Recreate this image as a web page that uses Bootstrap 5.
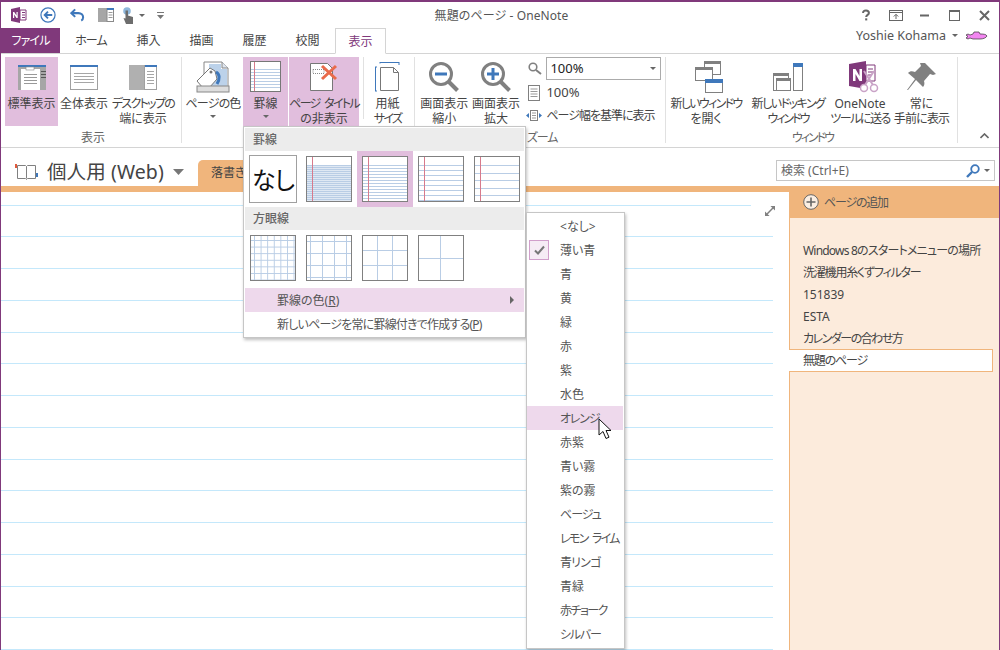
<!DOCTYPE html>
<html lang="ja">
<head>
<meta charset="utf-8">
<title>無題のページ - OneNote</title>
<link href="https://cdn.jsdelivr.net/npm/bootstrap@5.3.0/dist/css/bootstrap.min.css" rel="stylesheet">
<style>
html,body{margin:0;height:650px;overflow:hidden;background:#fff}
body{font-family:"Noto Sans","Noto Sans CJK JP",sans-serif;font-size:12px;line-height:15px;color:#444;font-feature-settings:"palt"}
#app{position:relative;width:1000px;height:650px;overflow:hidden;border-top:2px solid #80397b;border-left:1px solid #80397b;border-right:1px solid #80397b;display:flex;flex-direction:column}
svg{display:block}
.titlebar{height:26px;display:grid;grid-template-columns:1fr auto 1fr;align-items:center}
.qat{padding-left:10px}
.m4{margin-left:4px}.m8{margin-left:8px}.m12{margin-left:12px}.m13{margin-left:13px}.m14{margin-left:14px}
.wintitle{font-size:12px;letter-spacing:.1px;color:#555;padding-left:3px}
.winctl>span{width:29.5px;display:flex;justify-content:center}
.tabrow{height:26px;border-bottom:1px solid #d4d4d4;position:relative}
.rtab{height:25px;display:flex;align-items:center;justify-content:center;width:53px;color:#444}
.rtab-file{width:59px;background:#80397b;color:#fff;margin-top:0}
.rtab-home{width:62px}
.rtab-on{width:51px;margin-left:1px;height:26px;border:1px solid #d4d4d4;border-bottom:1px solid #fff;background:#fff;color:#80397b}
.account{margin-left:auto;padding-right:11px;gap:6px;color:#555;font-size:12.5px}
.subm{margin-left:2px}
.ribbon{height:94px;border-bottom:1px solid #d4d4d4;padding:3px 0 0 4px}
.rgroup{height:86px;border-right:1px solid #e1e1e1;position:relative}
.g1{width:177px}.g2{width:233px;padding-left:2px}.g3{width:251px;padding-left:4px}.g4{width:292px;padding-left:2px}
.grow-top{height:74px;gap:1px}
.grouplabel{text-align:center;color:#666;line-height:14px;min-height:14px}
.rbtn{height:69px;display:flex;flex-direction:column;align-items:center;text-align:center;white-space:nowrap;color:#444}
.rbtn-ico{height:39px;display:flex;align-items:center;justify-content:center;flex:none}
.rbtn-on{background:#e1bedd}
.w53{width:53px}.w50{width:50px}.w66{width:66px}.w58{width:58px}.w45{width:45px}.w70{width:70px}.w76{width:76px}.w78{width:78px}.w60{width:60px}.w61{width:61px}.w52{width:52px}
.gap2{margin-left:2px}
.ico-r3{margin-left:6px}.ico-r4{margin-left:8px}
.innersep{width:1px;height:62px;background:#e1e1e1;margin:0 0 0 3px}
.tri{display:inline-block;width:0;height:0;border-left:3px solid transparent;border-right:3px solid transparent;border-top:3px solid #666;vertical-align:middle}
.k05{letter-spacing:-.5px}.k08{letter-spacing:-.8px}.k1{letter-spacing:-1px}.k12{letter-spacing:-1.2px}.k15{letter-spacing:-1.5px}.k17{letter-spacing:-1.7px}.k2{letter-spacing:-2px}
.ws{word-spacing:3px}
.zoomcol{width:140px;margin-left:6px}
.zoomrow{height:23px;gap:4px;white-space:nowrap}
.zr2{margin-top:1px;font-size:13px}
.pw-ico{margin-left:-2px}
.combo{width:115px;height:23px;border:1px solid #ababab;padding:0 4px 0 3px;font-size:13px;color:#222}
.collapse-ctl{margin-left:auto;align-self:flex-end;padding:0 10px 8px 0}
.nbbar{height:38px;position:relative}
.nbname{font-size:19.5px;color:#444;line-height:24px;white-space:nowrap;letter-spacing:.1px}
.nbleft{padding:12px 0 0 14px;gap:9px}
.sectab{width:130px;height:26px;margin:12px 0 0 14px;background:#f0b57c;border-radius:5px 0 0 0;padding:5px 0 0 13px;color:#444;white-space:nowrap;overflow:hidden}
.searchbox{width:219px;height:21px;border:1px solid #c6c6c6;margin:12px 4px 0 auto;padding:0 4px;color:#666;justify-content:space-between;align-items:center}
.workarea{flex:1 1 auto;min-height:0;position:relative}
.pagecol{width:788px;border-top:6px solid #f0b57c;position:relative;flex:none}
.ruled{margin-right:16px;height:100%;background:repeating-linear-gradient(to bottom,#fff 0 12.7px,#c4e8fb 12.7px 13.7px,#fff 13.7px 31.75px)}
.expander{position:absolute;top:0;right:0;width:38px;height:30px;background:#fff;padding:14px 0 0 14px}
.panecol{flex:1 1 auto;background:#fcebdc;border-left:1px solid #f0b57c;position:relative}
.addpage{height:32px;background:#f0b57c;margin-left:-1px;padding-left:14px;gap:5px;color:#555}
.pagelist{padding-top:21px}
.pageitem{height:22px;padding-left:13px;display:flex;align-items:center;color:#444;white-space:nowrap}
.pageitem-on{background:#fff;border:1px solid #f0b57c;border-left:0;width:204px;margin-left:-1px;padding-left:14px;height:23px}
.rulemenu{display:block;top:124px;left:242px;width:283px;height:212px;padding:1px 1px 2px;border:1px solid #c6c6c6;border-radius:0;background:#fff;box-shadow:1px 2px 3px rgba(0,0,0,.25);font-size:12px;color:#555;min-width:0}
.mhead{height:23px;background:#ececec;padding:4px 0 0 8px;font-weight:500;color:#666}
.thumbrow{height:56px;align-items:center}
.gridrow{height:58px;align-items:flex-start}
.thumbcell{width:56px;height:56px;display:flex;align-items:center;justify-content:center;flex:none}
.thumbcell-on{background:#e1bedd}
.thumb{width:46px;height:46px;border:1px solid #808080;background-color:#fff}
.t-none{width:48px;height:48px;border-color:#a0a0a0;display:flex;align-items:center;justify-content:center;font-size:24px;color:#111;letter-spacing:-1px}
.t1,.t2,.t3,.t4{background-repeat:no-repeat;background-size:1px 100%,100% 100%;background-position:5px 0,0 8px}
.t1{background-image:linear-gradient(#d77a8c,#d77a8c),repeating-linear-gradient(to bottom,#b9cde5 0 1px,#dfe8f3 1px 2px)}
.t2{background-image:linear-gradient(#d77a8c,#d77a8c),repeating-linear-gradient(to bottom,#b9cde5 0 1px,#fff 1px 3px)}
.t3{background-image:linear-gradient(#d77a8c,#d77a8c),repeating-linear-gradient(to bottom,#b9cde5 0 1px,#fff 1px 5px)}
.t4{background-image:linear-gradient(#d77a8c,#d77a8c),repeating-linear-gradient(to bottom,#b9cde5 0 1px,#fff 1px 7.6px)}
.g-a,.g-b,.g-c,.g-d{background-image:linear-gradient(#b9cde5 1px,transparent 1px),linear-gradient(90deg,#b9cde5 1px,transparent 1px)}
.g-a{background-size:6.6px 6.6px;background-position:3px 4px}
.g-b{background-size:12px 12px;background-position:3px 5px}
.g-c{background-size:15px 15px;background-position:14px 14px}
.g-d{background-size:44px 44px;background-position:21px 22px}
.mrow{height:24px;display:flex;align-items:center;padding-left:32px;position:relative}
.mrow-on{background:#eed9ec}
.mrow-last{height:25px}
.arrow-r{position:absolute;right:10px;top:8px;width:0;height:0;border-top:4px solid transparent;border-bottom:4px solid transparent;border-left:4px solid #666}
.colormenu{display:block;top:210px;left:525px;width:99px;height:437px;padding:1px 1px 1px 0;border:1px solid #c6c6c6;border-radius:0;background:#fff;box-shadow:1px 2px 3px rgba(0,0,0,.25);font-size:12px;color:#555;min-width:0}
.citem{height:24px;display:flex;align-items:center;padding-left:33px;white-space:pre;position:relative}
.citem-hot{background:#eed9ec}
.chk{position:absolute;left:2px;top:2px;width:20px;height:20px;background:#f6ecf5;border:1px solid #d19fcb;display:flex;align-items:center;justify-content:center}
.cursorov{position:absolute;left:597px;top:416px;z-index:1100}
.u{text-decoration:underline}
</style>
</head>
<body>
<div id="app">
  <div class="titlebar">
    <div class="qat d-flex align-items-center">
      <svg width="16" height="16" viewBox="0 0 16 16"><path d="M0 2 9 0v16L0 14z" fill="#80397b"/><path d="M9 3h6v10H9z" fill="#fff" stroke="#80397b"/><path d="M11 5.500h3M11 8h3M11 10.500h3" stroke="#80397b"/><path d="M2 11V5h1.200l2.300 3.500V5h1.200v6H5.500L3.200 7.500V11z" fill="#fff"/></svg>
      <svg class="m13" width="16" height="16" viewBox="0 0 17 17"><circle cx="8.500" cy="8.500" r="7.500" fill="#fff" stroke="#3f78bb" stroke-width="1.300"/><path d="M13 8.500H5M8.500 5 5 8.500 8.500 12" fill="none" stroke="#3f78bb" stroke-width="2"/></svg>
      <svg class="m14" width="15" height="14" viewBox="0 0 16 14"><path d="M5.500 1 1.500 5l4 4" fill="none" stroke="#3f78bb" stroke-width="2.200"/><path d="M2 5h7c3 0 5 2 5 4.500 0 1.500-1 3-2 3.500" fill="none" stroke="#3f78bb" stroke-width="2.200"/></svg>
      <svg class="m13" width="16" height="14" viewBox="0 0 16 14"><rect width="9" height="14" fill="#a6a6a6"/><rect x="9" y=".5" width="6.500" height="13" fill="#fff" stroke="#8a8a8a"/><rect x="9" width="7" height="2" fill="#3f78bb"/><path d="M10.500 4.500h4M10.500 7h4M10.500 9.500h4" stroke="#999"/></svg>
      <svg class="m8" width="13" height="17" viewBox="0 0 13 17"><circle cx="5" cy="4" r="3.800" fill="#8fb8dc"/><path d="M3.500 3.500h2.500v5l5 1.500v7H4L1.500 11l2 .5z" fill="#6d6d6d"/></svg>
      <span class="tri m4"></span>
      <svg class="m12" width="7" height="9" viewBox="0 0 7 9"><path d="M0 1.500h7" stroke="#777"/><path d="M0 4h7L3.500 8z" fill="#777"/></svg>
    </div>
    <div class="wintitle">無題のページ - OneNote</div>
    <div class="winctl d-flex justify-content-end align-items-center">
      <span><svg width="10" height="12" viewBox="0 0 12 14"><path d="M2.500 4.500C2.500 2.500 4 1.500 6 1.500s3.500 1 3.500 3c0 2.300-3.300 2.500-3.300 5" fill="none" stroke="#666" stroke-width="2.400"/><rect x="5" y="11" width="2.500" height="2.500" fill="#666"/></svg></span>
      <span><svg width="14" height="11" viewBox="0 0 14 11"><rect x=".5" y=".5" width="13" height="10" fill="#fff" stroke="#666"/><path d="M.5 2.500h13" stroke="#666"/><path d="M7 9V4.500M4.800 6.500 7 4.300l2.200 2.200" fill="none" stroke="#666"/></svg></span>
      <span><svg width="10" height="3" viewBox="0 0 10 3"><rect y=".5" width="9" height="2" fill="#666"/></svg></span>
      <span><svg width="11" height="11" viewBox="0 0 11 11"><rect x=".5" y=".5" width="10" height="10" fill="none" stroke="#666"/><rect width="11" height="2" fill="#666"/></svg></span>
      <span><svg width="11" height="11" viewBox="0 0 11 11"><path d="M1 1l9 9M10 1l-9 9" stroke="#666" stroke-width="2"/></svg></span>
    </div>
  </div>

  <div class="tabrow d-flex align-items-start">
    <div class="rtab rtab-file k08">ファイル</div>
    <div class="rtab rtab-home k1">ホーム</div>
    <div class="rtab">挿入</div>
    <div class="rtab">描画</div>
    <div class="rtab">履歴</div>
    <div class="rtab">校閲</div>
    <div class="rtab rtab-on">表示</div>
    <div class="account d-flex align-items-center">
      <span>Yoshie Kohama</span><span class="tri"></span>
      <svg class="subm" width="22" height="9" viewBox="0 0 22 9"><path d="M0 4l2-1 2 1 3-1 1-2h5l1 2c3 0 6 0 7 2-1 2-4 3-7 3H7L4 7 2 8 0 7l2-1.500z" fill="#f286f0" stroke="#333" stroke-width=".7"/></svg>
    </div>
  </div>

  <div class="ribbon d-flex align-items-start">
    <div class="rgroup g1">
      <div class="grow-top d-flex">
        <div class="rbtn rbtn-on w53"><div class="rbtn-ico">
          <svg width="28" height="26" viewBox="0 0 28 26"><rect y="1" width="28" height="25" fill="#a6a6a6"/><rect y="1" width="28" height="2" fill="#3f78bb"/><rect x="3" y="5" width="19" height="21" fill="#fff"/><rect x="8" y="3" width="8" height="3" fill="#fff" stroke="#888" stroke-width=".6"/><path d="M6 10.500h13M6 13.500h13M6 16.500h13M6 19.500h13" stroke="#999"/><path d="M23 7.500h5M23 10.500h5M23 13.500h5" stroke="#555"/></svg></div>
          <span>標準表示</span></div>
        <div class="rbtn w50"><div class="rbtn-ico">
          <svg width="28" height="26" viewBox="0 0 28 26"><rect x=".5" y="1.500" width="27" height="24" fill="#fff" stroke="#a0a0a0"/><rect y="1" width="28" height="2" fill="#3f78bb"/><path d="M4 9.500h20M4 12.500h20M4 15.500h20M4 18.500h20" stroke="#a6a6a6"/></svg></div>
          <span>全体表示</span></div>
        <div class="rbtn w66"><div class="rbtn-ico">
          <svg width="28" height="26" viewBox="0 0 28 26"><rect y="1" width="15" height="25" fill="#b0b0b0"/><rect x="15.500" y="1.500" width="12" height="24" fill="#fff" stroke="#a0a0a0"/><rect x="16" y="1" width="12" height="2" fill="#3f78bb"/><path d="M18 7.500h7M18 10.500h7M18 13.500h7M18 16.500h7M18 19.500h7" stroke="#a6a6a6"/></svg></div>
          <span><span class="k17">デスクトップの</span><br>端に表示</span></div>
      </div>
      <div class="grouplabel">表示</div>
    </div>

    <div class="rgroup g2">
      <div class="grow-top d-flex align-items-start">
        <div class="rbtn w58"><div class="rbtn-ico">
          <svg width="34" height="32" viewBox="0 0 34 32"><path d="M8 1h18l6 6v19H8z" fill="#fff" stroke="#888"/><path d="M26 1v6h6" fill="#dfe6ef" stroke="#888"/><path d="M13 3h12v5h6v17H13z" fill="#bcd2ea"/><path d="M14 7 1 20l6 7h6l8-9-2-8z" fill="#fff" stroke="#777"/><circle cx="15" cy="11" r="1.500" fill="#777"/><path d="M20 11c4 2 4 7 1 12" fill="none" stroke="#3f78bb" stroke-width="3"/><rect x="1" y="25" width="32" height="6" fill="#ddd" stroke="#888"/></svg></div>
          <span class="k08">ページの色</span><span class="tri mt-1"></span></div>
        <div class="rbtn rbtn-on w45"><div class="rbtn-ico">
          <svg width="31" height="31" viewBox="0 0 31 31"><rect x=".5" y=".5" width="30" height="30" fill="#fff" stroke="#777"/><path d="M1 8.500h29M1 11.500h29M1 14.500h29M1 17.500h29M1 20.500h29M1 23.500h29M1 26.500h29" stroke="#b9cde5"/><path d="M4.500 1v29" stroke="#d77a8c"/></svg></div>
          <span>罫線</span><span class="tri mt-1"></span></div>
        <div class="rbtn rbtn-on w70"><div class="rbtn-ico">
          <svg width="30" height="29" viewBox="0 0 30 29"><path d="M1.500 1.500h17l5 5v22h-22z" fill="#fff" stroke="#777"/><path d="M4 7.500h11M4 11.500h11M4 7.500v4M15 7.500v4" stroke="#888" stroke-dasharray="1 1"/><path d="M13 4l14 13M27 4 13 17" stroke="#e96a4a" stroke-width="3"/></svg></div>
          <span><span class="k17 ws">ページ タイトル</span><br>の非表示</span></div>
        <div class="innersep"></div>
        <div class="rbtn w45"><div class="rbtn-ico">
          <svg width="25" height="30" viewBox="0 0 25 30"><path d="M5 .5h19M5 0v1.500M24 0v3M.5 5v24M0 5h2M0 29h2" stroke="#3f78bb" fill="none"/><path d="M5.500 5.500h13l5 5v18h-18z" fill="#fff" stroke="#777"/><path d="M18.500 5.500v5h5" fill="none" stroke="#777"/></svg></div>
          <span>用紙<br><span class="k17">サイズ</span></span></div>
      </div>
      <div class="grouplabel"></div>
    </div>

    <div class="rgroup g3">
      <div class="grow-top d-flex align-items-start">
        <div class="rbtn w52"><div class="rbtn-ico">
          <svg width="30" height="30" viewBox="0 0 30 30"><circle cx="12" cy="12" r="10.500" fill="#fff" stroke="#808080" stroke-width="3"/><path d="M20 20l8.500 8.500" stroke="#808080" stroke-width="4"/><rect x="6" y="10.500" width="12" height="3" fill="#3f78bb"/></svg></div>
          <span>画面表示<br>縮小</span></div>
        <div class="rbtn w52"><div class="rbtn-ico">
          <svg width="30" height="30" viewBox="0 0 30 30"><circle cx="12" cy="12" r="10.500" fill="#fff" stroke="#808080" stroke-width="3"/><path d="M20 20l8.500 8.500" stroke="#808080" stroke-width="4"/><path d="M6 12h12M12 6v12" stroke="#3f78bb" stroke-width="3"/></svg></div>
          <span>画面表示<br>拡大</span></div>
        <div class="zoomcol d-flex flex-column">
          <div class="zoomrow d-flex align-items-center">
            <svg width="14" height="13" viewBox="0 0 14 13"><circle cx="5" cy="5" r="3.800" fill="#fff" stroke="#808080" stroke-width="1.600"/><path d="M8 8l5 4" stroke="#808080" stroke-width="2"/></svg>
            <div class="combo d-flex align-items-center justify-content-between"><span>100%</span><span class="tri"></span></div>
          </div>
          <div class="zoomrow zr2 d-flex align-items-center">
            <svg width="14" height="16" viewBox="0 0 14 16"><rect x=".5" y=".5" width="11" height="15" fill="#fff" stroke="#808080"/><path d="M2.500 4h7M2.500 6.500h7M2.500 9h7M2.500 11.500h7" stroke="#999"/></svg>
            <span>100%</span>
          </div>
          <div class="zoomrow d-flex align-items-center">
            <svg class="pw-ico" width="16" height="11" viewBox="0 0 16 11"><rect x="4.500" y=".5" width="7" height="10" fill="#fff" stroke="#808080"/><path d="M6 3h4M6 5.500h4M6 8h4" stroke="#999"/><path d="M0 5.500 3 3v5zM16 5.500 13 3v5z" fill="#3f78bb"/></svg>
            <span class="k1">ページ幅を基準に表示</span>
          </div>
        </div>
      </div>
      <div class="grouplabel k12">ズーム</div>
    </div>

    <div class="rgroup g4">
      <div class="grow-top d-flex align-items-start">
        <div class="rbtn w76"><div class="rbtn-ico ico-r3">
          <svg width="28" height="32" viewBox="0 0 28 32"><rect x="9.500" y=".5" width="16" height="13" fill="#fff" stroke="#808080"/><rect x="9" width="17" height="3" fill="#808080"/><rect x=".5" y="6.500" width="17" height="13" fill="#fff" stroke="#808080"/><rect width="18" height="3" y="6" fill="#808080"/><rect x="10.500" y="18.500" width="17" height="13" fill="#fff" stroke="#808080"/><rect x="10" y="18" width="18" height="4" fill="#3f78bb"/></svg></div>
          <span><span class="k17">新しいウィンドウ</span><br>を開く</span></div>
        <div class="rbtn w78 ms-1"><div class="rbtn-ico">
          <svg width="30" height="28" viewBox="0 0 30 28"><rect x="20.500" y=".5" width="9" height="27" fill="#fff" stroke="#808080"/><rect x="20" width="10" height="4" fill="#3f78bb"/><rect x=".5" y="10.500" width="15" height="17" fill="#fff" stroke="#808080"/><rect y="10" width="16" height="3" fill="#808080"/><rect x="3.500" y="15.500" width="14" height="12" fill="#fff" stroke="#808080"/><rect x="3" y="15" width="15" height="3" fill="#808080"/></svg></div>
          <span><span class="k15">新しいドッキング</span><br><span class="k2">ウィンドウ</span></span></div>
        <div class="rbtn w60 gap2"><div class="rbtn-ico ico-r4">
          <svg width="30" height="32" viewBox="0 0 30 32"><path d="M0 3 17 0v28L0 25z" fill="#80397b"/><path d="M17 4h9v16h-9z" fill="#fff" stroke="#80397b"/><path d="M19 8h5M19 11h5M19 14h3" stroke="#80397b"/><path d="M4 20V8h2.500l4 7V8H13v12h-2.500l-4-7v7z" fill="#fff"/><path d="M15 10l9 14M25 10l-9 14" stroke="#c9a3c7" stroke-width="2"/><circle cx="15" cy="27" r="3.500" fill="#fff" stroke="#c9a3c7" stroke-width="1.500"/><circle cx="25" cy="27" r="3.500" fill="#fff" stroke="#c9a3c7" stroke-width="1.500"/></svg></div>
          <span>OneNote<br><span class="k15">ツールに送る</span></span></div>
        <div class="rbtn w61"><div class="rbtn-ico">
          <svg width="30" height="28" viewBox="0 0 30 28"><path d="M18 0l11 11-3 1-3-1-6 7c1 3 0 5-1 6L9 17 1 27 0 27l8-11-7-6c2-2 4-2 7-1l6-6-1-3z" fill="#808080"/></svg></div>
          <span>常に<br><span class="k08">手前に表示</span></span></div>
      </div>
      <div class="grouplabel k2">ウィンドウ</div>
    </div>

    <div class="collapse-ctl">
      <svg width="9" height="6" viewBox="0 0 9 6"><path d="M.5 5 4.500 1l4 4" fill="none" stroke="#666" stroke-width="1.600"/></svg>
    </div>
  </div>

  <div class="nbbar d-flex align-items-start">
    <div class="nbleft d-flex align-items-center">
      <svg width="23" height="18" viewBox="0 0 23 18"><path d="M2.500 2.500h8l1 1 1-1h8v13h-8l-1 1-1-1h-8z" fill="#fff" stroke="#808080"/><path d="M11.500 3.500v12" stroke="#808080"/><rect width="2" height="4" y="1" fill="#e0593b"/><rect x="21" y="10" width="2" height="4" fill="#3f78bb"/></svg>
      <span class="nbname">個人用 (Web)</span>
      <svg width="11" height="6" viewBox="0 0 11 6"><path d="M0 0h11L5.500 6z" fill="#777"/></svg>
    </div>
    <div class="sectab">落書き</div>
    <div class="searchbox d-flex">
      <span>検索 (Ctrl+E)</span>
      <span class="d-flex align-items-center gap-1">
        <svg width="14" height="14" viewBox="0 0 14 14"><circle cx="9" cy="5" r="3.800" fill="#fff" stroke="#3f78bb" stroke-width="1.800"/><path d="M6 8l-5 5" stroke="#3f78bb" stroke-width="2.400"/></svg>
        <span class="tri"></span>
      </span>
    </div>
  </div>

  <div class="workarea d-flex">
    <div class="pagecol">
      <div class="ruled"></div>
      <div class="expander">
        <svg width="10" height="10" viewBox="0 0 12 12"><path d="M2.500 9.500l7-7" stroke="#808080" stroke-width="1.800"/><path d="M6.500 0H12v5.500zM5.500 12H0V6.500z" fill="#808080"/></svg>
      </div>
    </div>
    <div class="panecol">
      <div class="addpage d-flex align-items-center">
        <svg width="16" height="16" viewBox="0 0 16 16"><circle cx="8" cy="8" r="7.300" fill="#fbeee2" stroke="#666"/><path d="M3.500 8h9M8 3.500v9" stroke="#666" stroke-width="1.600"/></svg>
        <span class="k12">ページの追加</span>
      </div>
      <div class="pagelist">
        <div class="pageitem k08">Windows 8のスタートメニューの場所</div>
        <div class="pageitem k12">洗濯機用糸くずフィルター</div>
        <div class="pageitem">151839</div>
        <div class="pageitem">ESTA</div>
        <div class="pageitem k15">カレンダーの合わせ方</div>
        <div class="pageitem pageitem-on k12">無題のページ</div>
      </div>
    </div>
  </div>

  <div class="dropdown-menu rulemenu position-absolute">
    <div class="mhead">罫線</div>
    <div class="thumbrow d-flex">
      <div class="thumbcell"><div class="thumb t-none">なし</div></div>
      <div class="thumbcell"><div class="thumb t1"></div></div>
      <div class="thumbcell thumbcell-on"><div class="thumb t2"></div></div>
      <div class="thumbcell"><div class="thumb t3"></div></div>
      <div class="thumbcell"><div class="thumb t4"></div></div>
    </div>
    <div class="mhead">方眼線</div>
    <div class="gridrow d-flex">
      <div class="thumbcell"><div class="thumb g-a"></div></div>
      <div class="thumbcell"><div class="thumb g-b"></div></div>
      <div class="thumbcell"><div class="thumb g-c"></div></div>
      <div class="thumbcell"><div class="thumb g-d"></div></div>
    </div>
    <div class="mrow mrow-on">罫線の色(<span class="u">R</span>)<span class="arrow-r"></span></div>
    <div class="mrow mrow-last k08">新しいページを常に罫線付きで作成する(<span class="u">P</span>)</div>
  </div>

  <div class="dropdown-menu colormenu position-absolute">
    <div class="citem">&lt;なし&gt;</div>
    <div class="citem"><span class="chk"><svg width="11" height="10" viewBox="0 0 11 10"><path d="M1 5.500 4 8.500 10 1.500" fill="none" stroke="#777" stroke-width="2"/></svg></span>薄い青</div>
    <div class="citem">青</div>
    <div class="citem">黄</div>
    <div class="citem">緑</div>
    <div class="citem">赤</div>
    <div class="citem">紫</div>
    <div class="citem">水色</div>
    <div class="citem citem-hot k12">オレンジ</div>
    <div class="citem">赤紫</div>
    <div class="citem">青い霧</div>
    <div class="citem">紫の霧</div>
    <div class="citem k1">ベージュ</div>
    <div class="citem k17 ws">レモン ライム</div>
    <div class="citem k08">青リンゴ</div>
    <div class="citem">青緑</div>
    <div class="citem k15">赤チョーク</div>
    <div class="citem k12">シルバー</div>
  </div>

  <svg class="cursorov" width="14" height="22" viewBox="0 0 14 22"><path d="M1 1v16l4-3.500 3 7 3-1.300-3-6.700h5z" fill="#fff" stroke="#111"/></svg>
</div>
<script src="https://cdn.jsdelivr.net/npm/bootstrap@5.3.0/dist/js/bootstrap.bundle.min.js"></script>
</body>
</html>
